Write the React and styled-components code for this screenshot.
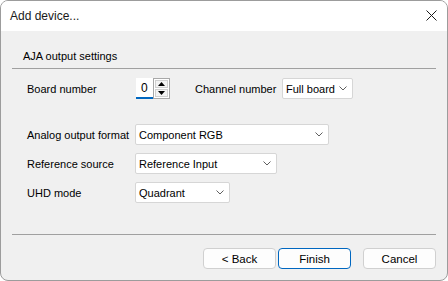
import styled, { createGlobalStyle } from "styled-components";

const GlobalStyle = createGlobalStyle`
  html, body {
    margin: 0;
    padding: 0;
    background: #ffffff;
  }
  * {
    box-sizing: border-box;
  }
`;

const ChevronDown = () => (
  <svg width="8" height="5" viewBox="0 0 8 5">
    <path d="M0.5 0.5 L4 4 L7.5 0.5" fill="none" stroke="#5f5f5f" strokeWidth="1" />
  </svg>
);

const CloseIcon = () => (
  <svg width="11" height="11" viewBox="0 0 11 11">
    <path d="M0.5 0.5 L10.5 10.5 M10.5 0.5 L0.5 10.5" stroke="#1a1a1a" strokeWidth="1" />
  </svg>
);

const ComboBox = ({ value, width }) => (
  <Combo $width={width}>
    <ComboText>{value}</ComboText>
    <ChevronDown />
  </Combo>
);

const App = () => {
  return (
    <>
      <GlobalStyle />
      <Window>
        <TitleBar>
          <Title>Add device...</Title>
          <CloseButton>
            <CloseIcon />
          </CloseButton>
        </TitleBar>
        <Body>
          <GroupHeader>AJA output settings</GroupHeader>
          <Separator />
          <Form>
            <Row>
              <Label>Board number</Label>
              <Spinner>
                <SpinEdit>0</SpinEdit>
                <SpinButtons>
                  <SpinButton>
                    <svg width="7" height="4" viewBox="0 0 7 4">
                      <path d="M0 4 L3.5 0 L7 4 Z" fill="#000" />
                    </svg>
                  </SpinButton>
                  <SpinButton>
                    <svg width="7" height="4" viewBox="0 0 7 4">
                      <path d="M0 0 L3.5 4 L7 0 Z" fill="#000" />
                    </svg>
                  </SpinButton>
                </SpinButtons>
              </Spinner>
              <InlineLabel>Channel number</InlineLabel>
              <ComboBox value="Full board" width={71} />
            </Row>
            <OptionGroup>
              <Row>
                <Label>Analog output format</Label>
                <ComboBox value="Component RGB" width={194} />
              </Row>
              <Row>
                <Label>Reference source</Label>
                <ComboBox value="Reference Input" width={142} />
              </Row>
              <Row>
                <Label>UHD mode</Label>
                <ComboBox value="Quadrant" width={95} />
              </Row>
            </OptionGroup>
          </Form>
          <Separator />
          <Footer>
            <Button>&lt; Back</Button>
            <Button $primary>Finish</Button>
            <Button $gap>Cancel</Button>
          </Footer>
        </Body>
      </Window>
    </>
  );
};

const Window = styled.div`
  width: 448px;
  height: 281px;
  border: 1px solid #9c9c9c;
  border-radius: 8px;
  overflow: hidden;
  display: flex;
  flex-direction: column;
  background: #f0f0f0;
  font-family: "Liberation Sans", Arial, sans-serif;
  font-size: 11px;
  color: #000;
`;

const TitleBar = styled.div`
  height: 30px;
  background: #ffffff;
  display: flex;
  align-items: center;
  justify-content: space-between;
  padding: 0 9px 0 9px;
`;

const Title = styled.div`
  font-size: 12px;
  color: #1a1a1a;
`;

const CloseButton = styled.div`
  display: flex;
  align-items: center;
  justify-content: center;
  width: 14px;
  height: 14px;
  margin-bottom: 1px;
`;

const Body = styled.div`
  flex: 1;
  display: flex;
  flex-direction: column;
  padding: 0 11px;
`;

const GroupHeader = styled.div`
  padding: 17px 0 0 11px;
  height: 37px;
  line-height: 16px;
`;

const Separator = styled.div`
  height: 1px;
  background: #a0a0a0;
`;

const Form = styled.div`
  flex: 1;
  display: flex;
  flex-direction: column;
  padding: 9px 0 0 15px;
`;

const OptionGroup = styled.div`
  display: flex;
  flex-direction: column;
  gap: 8px;
  margin-top: 25px;
`;

const Row = styled.div`
  display: flex;
  align-items: center;
  height: 21px;
`;

const Label = styled.div`
  width: 108px;
  flex-shrink: 0;
  white-space: nowrap;
`;

const InlineLabel = styled.div`
  margin-left: 25px;
  width: 87px;
  flex-shrink: 0;
  white-space: nowrap;
`;

const Combo = styled.div`
  width: ${(p) => p.$width}px;
  flex-shrink: 0;
  height: 21px;
  background: #ffffff;
  border: 1px solid #d6d6d6;
  border-radius: 2px;
  display: flex;
  align-items: center;
  justify-content: space-between;
  padding: 0 5px 0 3px;
`;

const ComboText = styled.span`
  font-size: 11px;
  white-space: nowrap;
`;

const Spinner = styled.div`
  display: flex;
  flex-shrink: 0;
  height: 21px;
  margin-left: 1px;
`;

const SpinEdit = styled.div`
  width: 17px;
  height: 21px;
  background: #ffffff;
  border-bottom: 2px solid #0067c0;
  padding: 3px 0 0 5px;
  font-size: 12px;
`;

const SpinButtons = styled.div`
  width: 17px;
  height: 21px;
  border: 1px solid #a8a8a8;
  display: flex;
  flex-direction: column;
  gap: 1px;
  padding: 1px;
  background: #ffffff;
`;

const SpinButton = styled.div`
  flex: 1;
  background: #f3f3f3;
  border: 1px solid #d0d0d0;
  display: flex;
  align-items: center;
  justify-content: center;
`;

const Footer = styled.div`
  display: flex;
  justify-content: flex-end;
  gap: 2px;
  padding: 13px 0 11px;
`;

const Button = styled.div`
  width: 73px;
  height: 21px;
  display: flex;
  align-items: center;
  justify-content: center;
  background: #fdfdfd;
  border: 1px solid ${(p) => (p.$primary ? "#0067c0" : "#d0d0d0")};
  border-radius: 4px;
  font-size: 11.5px;
  margin-left: ${(p) => (p.$gap ? "10px" : "0")};
`;

export default App;
